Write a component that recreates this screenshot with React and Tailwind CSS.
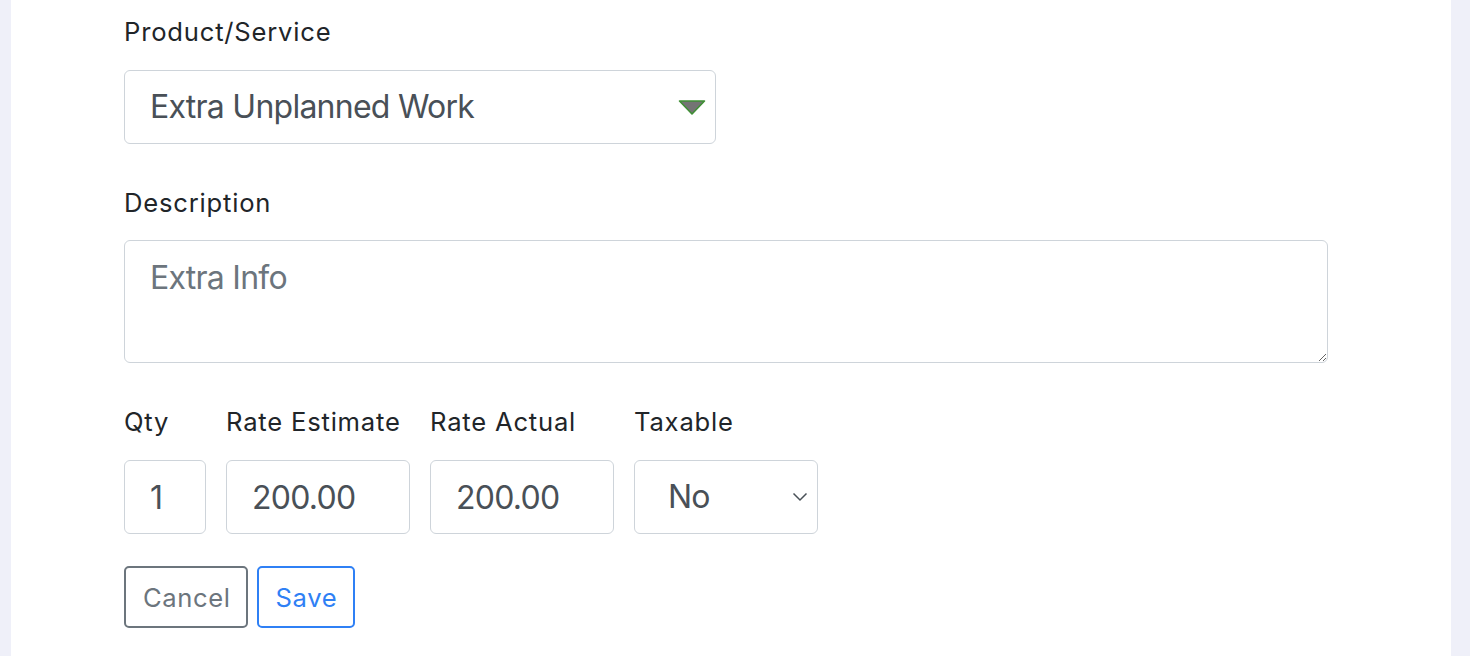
const font = { fontFamily: 'Inter, "Noto Sans", sans-serif' }

function Label({ children, className = '' }) {
  return (
    <label className={`block text-[25.6px] leading-[38px] tracking-[0.8px] text-[#212529] ${className}`}>{children}</label>
  )
}

const boxCls =
  'h-[74px] border border-[#ced4da] rounded-[6px] bg-white px-[25px] text-[32px] tracking-[-0.75px] text-[#495057] outline-none'

export default function App() {
  return (
    <div className="flex w-[1470px] h-[656px] bg-[#eff0f9]" style={font}>
      <div className="w-[11px]" />
      <div className="w-[1440px] bg-white pl-[113px] pt-[13px]">
        {/* Product / Service */}
        <Label className="mb-[19px]">Product/Service</Label>
        <div className={`${boxCls} w-[592px] flex items-center justify-between pr-[8px]`}>
          <span>Extra Unplanned Work</span>
          <svg width="30" height="18" viewBox="0 0 30 18">
            <polygon points="2.5,3 27.5,3 15,16" fill="#747474" stroke="#3f8f35" strokeWidth="1.6" strokeLinejoin="round" />
          </svg>
        </div>

        {/* Description */}
        <Label className="mt-[40px] mb-[18px]">Description</Label>
        <textarea
          placeholder="Extra Info"
          className="block w-[1204px] h-[123px] border border-[#ced4da] rounded-[6px] px-[25px] pt-[13px] text-[32px] leading-[48px] tracking-[-0.75px] text-[#495057] placeholder:text-[#6c757d] outline-none"
        />

        {/* Qty / rates / taxable */}
        <div className="flex gap-[20px] mt-[40px]">
          <div className="w-[82px]">
            <Label className="mb-[19px]">Qty</Label>
            <input defaultValue="1" className={`${boxCls} w-[82px]`} />
          </div>
          <div className="w-[184px]">
            <Label className="mb-[19px]">Rate Estimate</Label>
            <input defaultValue="200.00" className={`${boxCls} w-[184px]`} />
          </div>
          <div className="w-[184px]">
            <Label className="mb-[19px]">Rate Actual</Label>
            <input defaultValue="200.00" className={`${boxCls} w-[184px]`} />
          </div>
          <div className="w-[184px]">
            <Label className="mb-[19px]">Taxable</Label>
            <div className={`${boxCls} w-[184px] flex items-center justify-between pl-[33px] pr-[9px]`}>
              <span>No</span>
              <svg width="16" height="10" viewBox="0 0 16 10">
                <path d="M1.5 1.5 L8 8 L14.5 1.5" fill="none" stroke="#495057" strokeWidth="1.5" />
              </svg>
            </div>
          </div>
        </div>

        {/* Buttons */}
        <div className="flex gap-[9px] mt-[32px]">
          <button className="h-[62px] pl-[17px] pr-[15px] pt-[3px] border-2 border-[#6c757d] rounded-[5px] text-[25.6px] tracking-[0.6px] text-[#6c757d] bg-white">
            Cancel
          </button>
          <button className="h-[62px] pl-[17px] pr-[16px] pt-[3px] border-2 border-[#2f80f5] rounded-[5px] text-[25.6px] tracking-[0.6px] text-[#2f80f5] bg-white">
            Save
          </button>
        </div>
      </div>
    </div>
  )
}
